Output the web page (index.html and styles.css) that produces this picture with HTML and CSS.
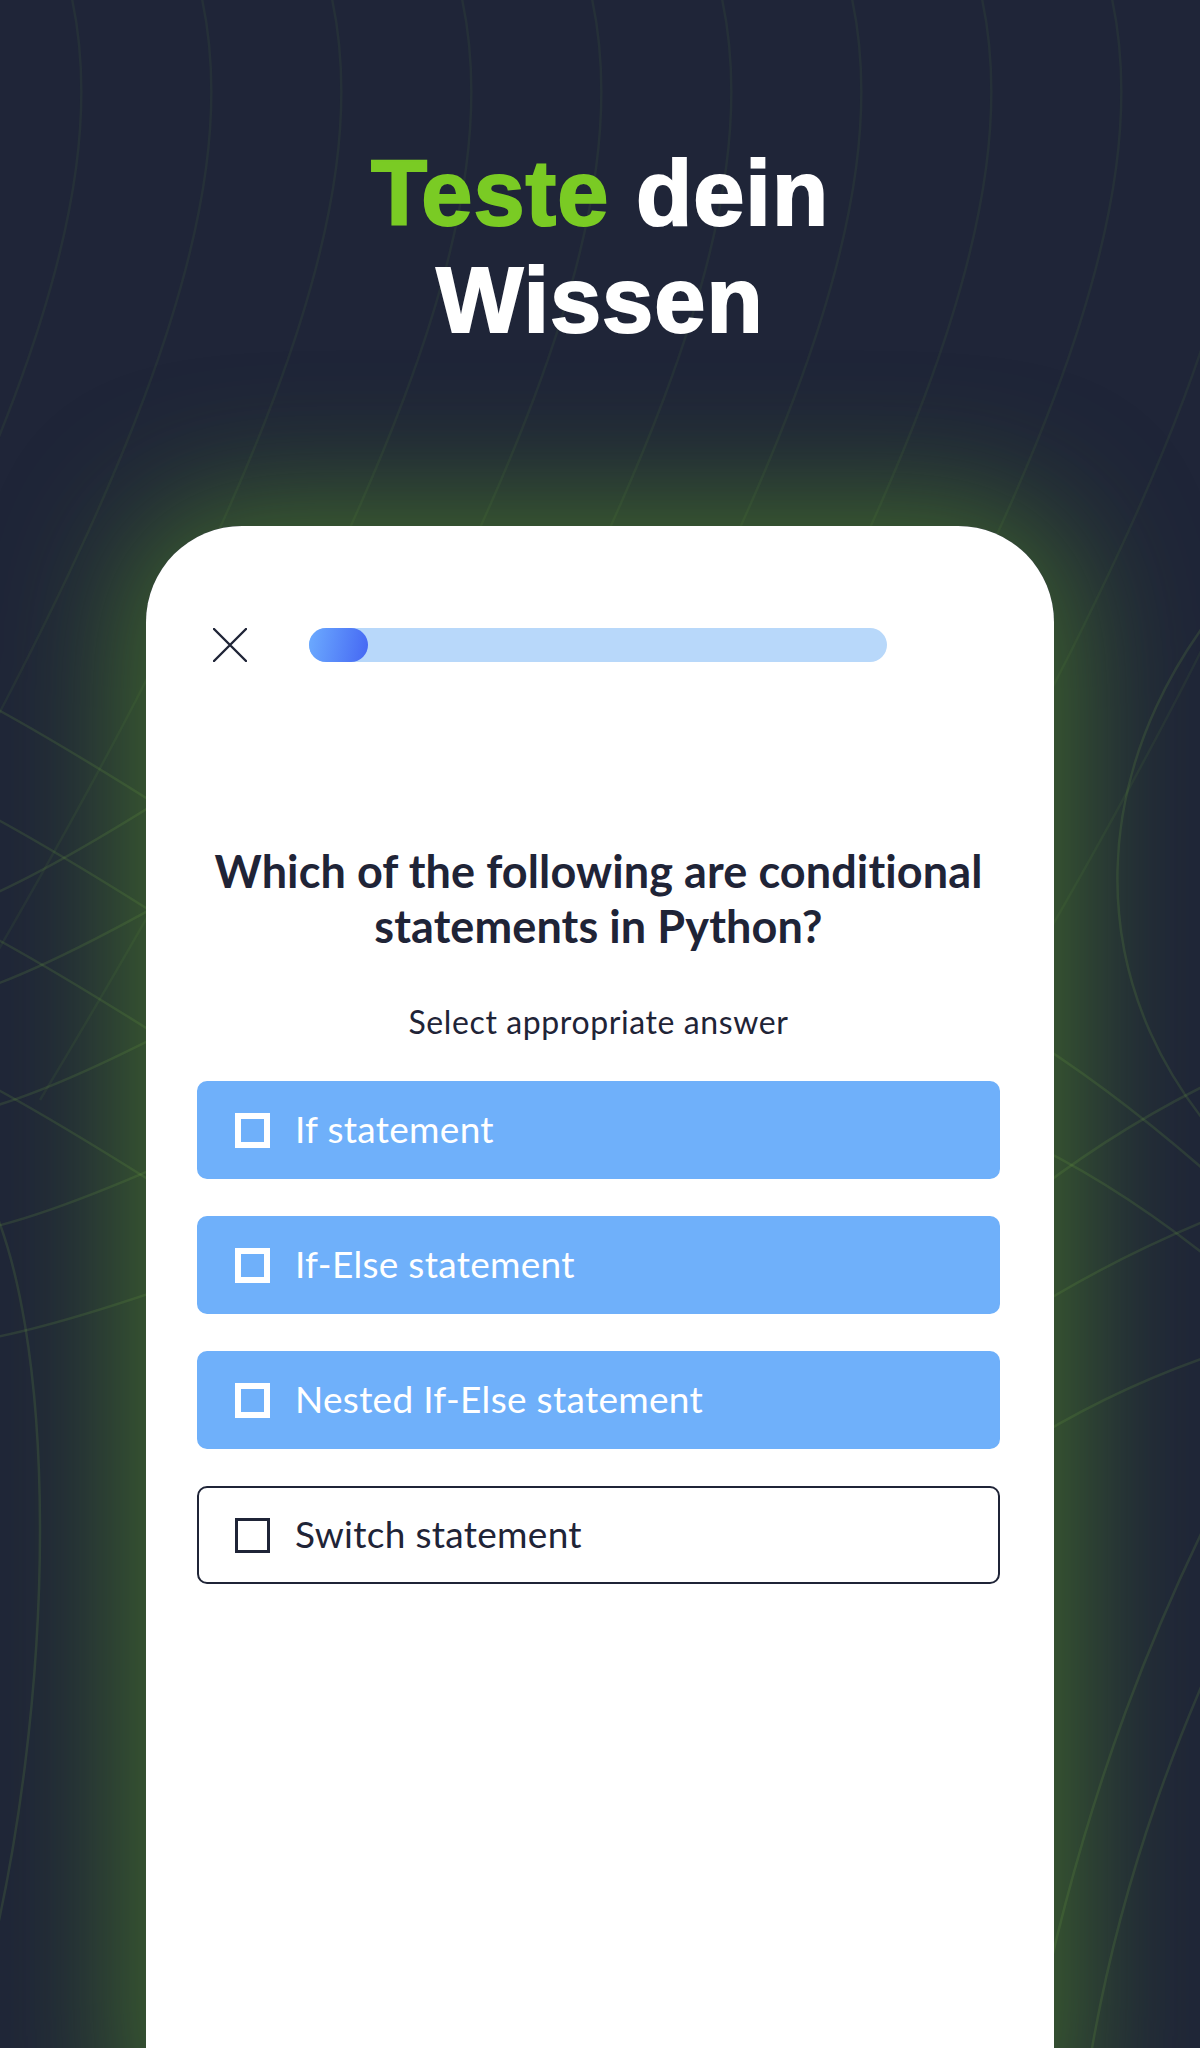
FILE: index.html
```html
<!DOCTYPE html>
<html lang="de">
<head>
    <meta charset="UTF-8">
    <meta name="viewport" content="width=device-width, initial-scale=1.0">
    <title>Teste dein Wissen</title>
    <link rel="stylesheet" href="styles.css">
</head>
<body>
    <div class="glow"></div>

    <svg class="lines" width="1200" height="2048" viewBox="0 0 1200 2048" fill="none">
        <!-- top family, curving down to the left -->
        <g class="faint">
            <path d="M70,-10 C120,200 10,500 -350,1100"/>
            <path d="M200,-10 C250,200 140,500 -220,1100"/>
            <path d="M330,-10 C380,200 270,500 -90,1100"/>
            <path d="M460,-10 C510,200 400,500 40,1100"/>
            <path d="M590,-10 C640,200 530,500 170,1100"/>
            <path d="M720,-10 C770,200 660,500 300,1100"/>
            <path d="M850,-10 C900,200 790,500 430,1100"/>
            <path d="M980,-10 C1030,200 920,500 560,1100"/>
            <path d="M1110,-10 C1160,200 1050,500 690,1100"/>
            <path d="M1240,-10 C1290,200 1180,500 820,1100"/>
            <path d="M1370,-10 C1420,200 1310,500 950,1100"/>
        </g>
        <!-- left side crossing arcs -->
        <path d="M-20,700 Q150,790 600,1100"/>
        <path d="M-20,810 Q150,900 600,1210"/>
        <path d="M-20,930 Q150,1020 600,1330"/>
        <path d="M-20,1080 Q150,1170 600,1480"/>
        <path d="M-20,900 Q100,850 400,640"/>
        <path d="M-20,990 Q100,950 400,760"/>
        <path d="M-20,1110 Q100,1080 400,900"/>
        <path d="M-20,1230 Q100,1205 400,1050"/>
        <path d="M-20,1340 Q100,1320 400,1200"/>
        <path d="M-20,1180 C60,1320 60,1700 -20,2000"/>
        <!-- right side -->
        <path d="M1260,560 C1080,740 1060,1000 1260,1180"/>
        <path d="M1000,1130 Q1120,1180 1260,1300"/>
        <path d="M1000,1020 Q1120,1090 1260,1220"/>
        <path d="M1000,1220 Q1120,1120 1260,1060"/>
        <path d="M1000,1330 Q1120,1250 1260,1200"/>
        <path d="M1000,1460 Q1120,1380 1260,1340"/>
        <path d="M1260,1420 C1160,1600 1080,1800 1030,2060"/>
        <path d="M1260,1560 C1180,1720 1120,1880 1090,2060"/>
    </svg>

    <header class="hero">
        <h1><span class="accent">Teste</span> dein<br>Wissen</h1>
    </header>

    <main class="card">
        <div class="topbar">
            <svg class="close" width="34" height="34" viewBox="0 0 34 34">
                <path d="M1,1 L33,33 M33,1 L1,33" stroke="#1f2437" stroke-width="2.4" stroke-linecap="round"/>
            </svg>
            <div class="progress">
                <div class="progress-fill"></div>
            </div>
        </div>

        <h2 class="question">Which of the following are conditional statements in Python?</h2>
        <p class="hint">Select appropriate answer</p>

        <div class="options">
            <div class="option selected"><span class="box"></span>If statement</div>
            <div class="option selected"><span class="box"></span>If-Else statement</div>
            <div class="option selected"><span class="box"></span>Nested If-Else statement</div>
            <div class="option"><span class="box"></span>Switch statement</div>
        </div>
    </main>
</body>
</html>
```

FILE: styles.css
```css
body {
    margin: 0;
    height: 2048px;
    overflow: hidden;
    position: relative;
    background-color: #1f2538;
    font-family: Lato, "Open Sans", sans-serif;
    color: #1f2437;
}

.glow {
    position: absolute;
    left: 146px;
    top: 526px;
    width: 908px;
    height: 1600px;
    border-radius: 96px 96px 0 0;
    box-shadow: 0 0 130px 20px rgba(95, 165, 35, 0.55);
}

.lines {
    position: absolute;
    left: 0;
    top: 0;
}

.lines path {
    stroke: rgba(120, 175, 70, 0.16);
    stroke-width: 2.5;
}

.lines .faint path {
    stroke: rgba(120, 175, 70, 0.08);
}

.hero {
    position: relative;
    text-align: center;
    padding-top: 140px;
}

.hero h1 {
    margin: 0;
    font-family: "Liberation Sans", Arial, sans-serif;
    font-weight: bold;
    font-size: 92px;
    line-height: 107px;
    letter-spacing: 1px;
    color: #ffffff;
    -webkit-text-stroke: 2px #ffffff;
}

.accent {
    color: #7acb24;
    -webkit-text-stroke: 2px #7acb24;
}

.card {
    position: relative;
    box-sizing: border-box;
    width: 908px;
    height: 1522px;
    margin: 172px auto 0;
    padding: 102px 54px 0 51px;
    background: #ffffff;
    border-radius: 96px 96px 0 0;
}

.topbar {
    display: flex;
    align-items: center;
    gap: 62px;
    padding-left: 16px;
}

.close {
    display: block;
}

.progress {
    width: 578px;
    height: 34px;
    border-radius: 17px;
    background: #b8d8fa;
}

.progress-fill {
    width: 59px;
    height: 34px;
    border-radius: 17px;
    background: linear-gradient(100deg, #6cabff, #4567f3);
}

.question {
    margin: 182px 0 0;
    text-align: center;
    font-size: 45px;
    line-height: 55px;
    font-weight: bold;
    letter-spacing: 0.1px;
}

.hint {
    margin: 48px 0 0;
    text-align: center;
    font-size: 32px;
    line-height: 40px;
    letter-spacing: 0.6px;
}

.options {
    display: flex;
    flex-direction: column;
    gap: 37px;
    margin-top: 39px;
}

.option {
    box-sizing: border-box;
    height: 98px;
    display: flex;
    align-items: center;
    gap: 25px;
    padding-left: 38px;
    padding-bottom: 4px;
    border: 2px solid #1f2437;
    border-radius: 10px;
    font-size: 37px;
    letter-spacing: 0.3px;
    color: #1f2437;
}

.option.selected {
    background: #6fb0fa;
    border-color: #6fb0fa;
    color: #ffffff;
}

.box {
    box-sizing: border-box;
    width: 35px;
    height: 35px;
    border: 3px solid #1f2437;
    margin-left: -2px;
    margin-top: 4px;
}

.option.selected .box {
    border: 6px solid #ffffff;
}
```
